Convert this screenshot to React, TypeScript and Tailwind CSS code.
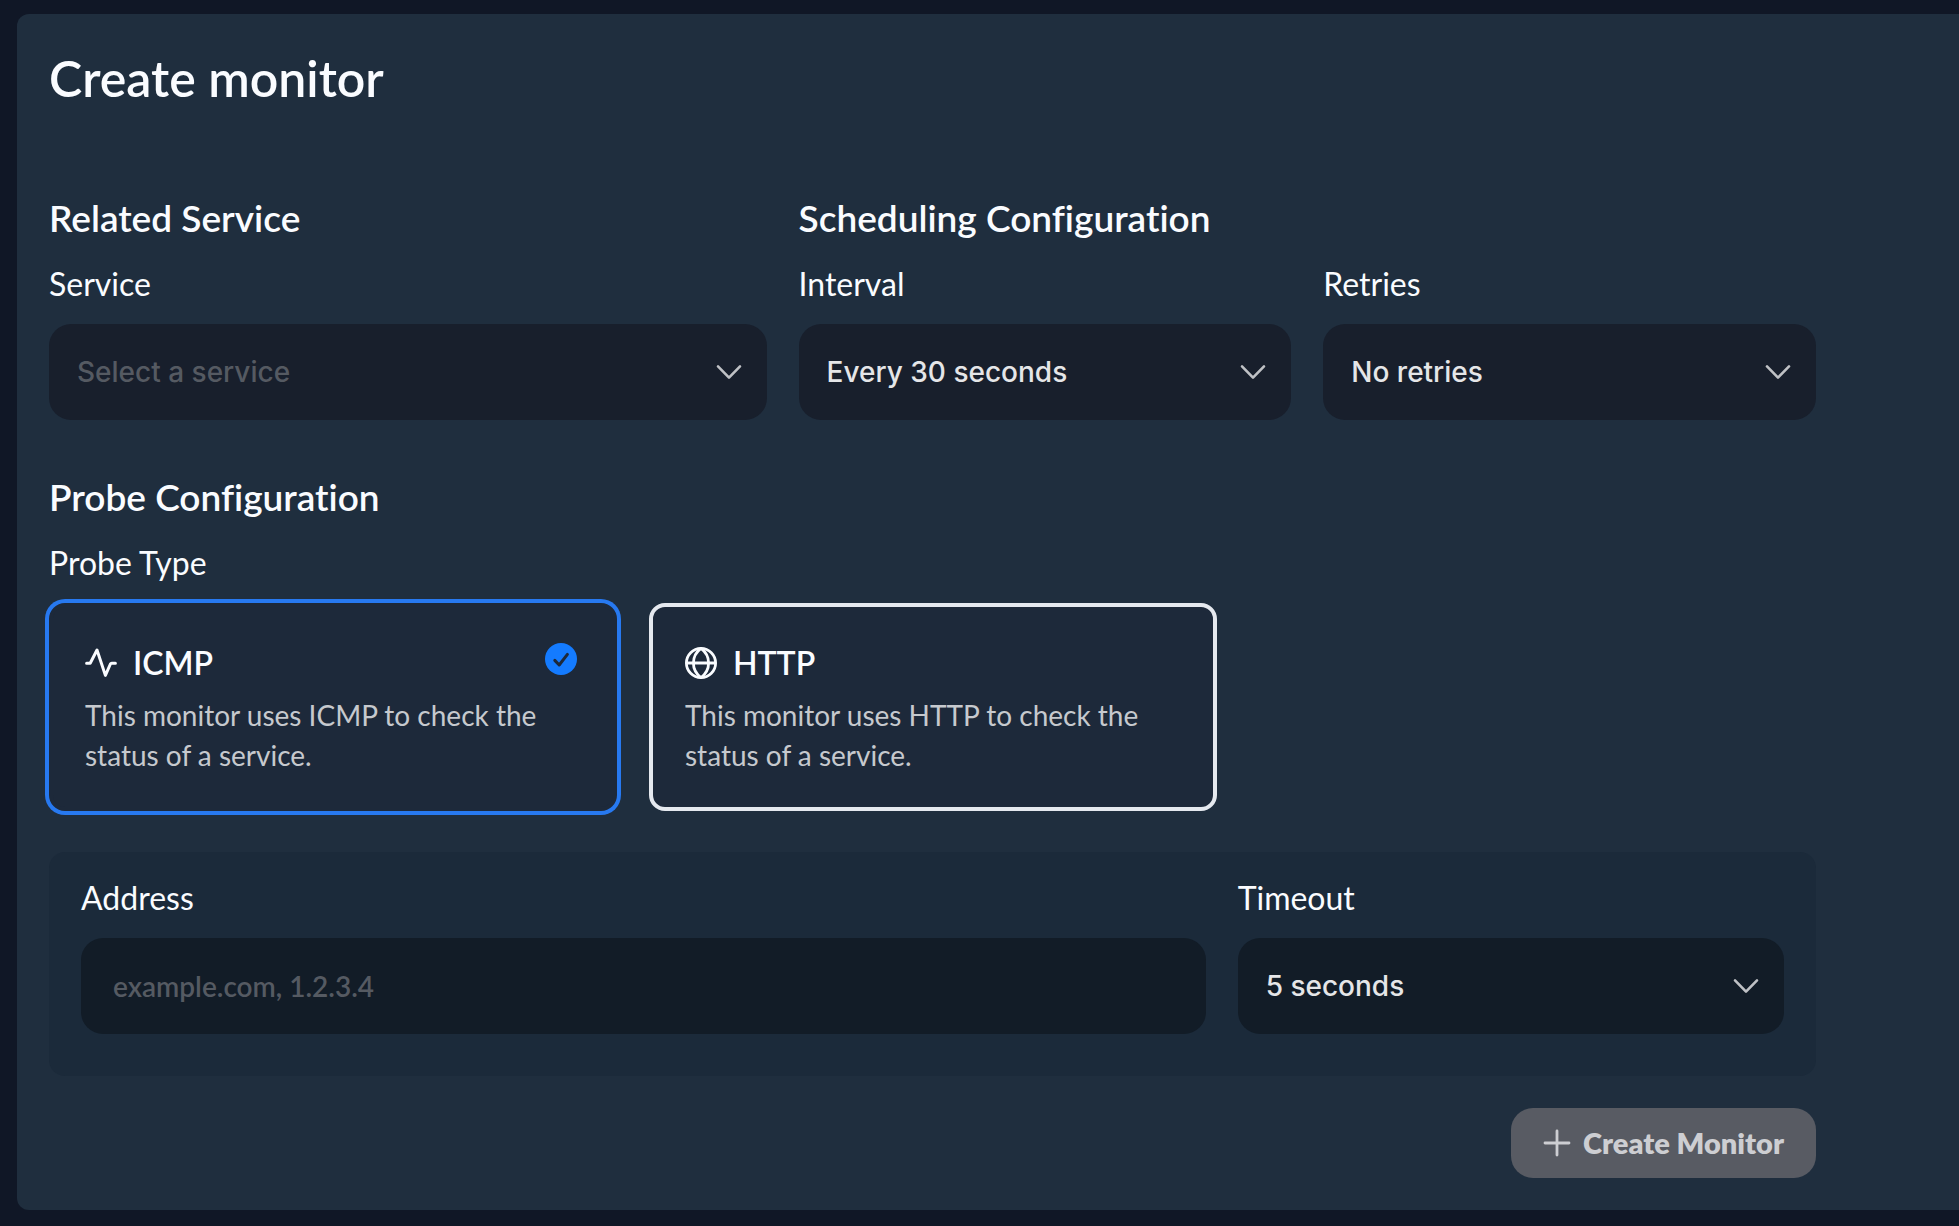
import { useId, useState, type ReactNode } from "react";
import clsx from "clsx";

type ProbeType = "icmp" | "http";

const SERVICES = ["Website", "API", "Database"];
const INTERVALS = ["Every 30 seconds", "Every minute", "Every 5 minutes"];
const RETRIES = ["No retries", "1 retry", "2 retries", "3 retries"];
const TIMEOUTS = ["5 seconds", "10 seconds", "30 seconds"];

const PROBES: { type: ProbeType; name: string; icon: ReactNode }[] = [
  { type: "icmp", name: "ICMP", icon: <PulseIcon /> },
  { type: "http", name: "HTTP", icon: <GlobeIcon /> },
];

function PulseIcon() {
  return (
    <svg
      viewBox="0 0 32 32"
      className="size-8"
      fill="none"
      stroke="currentColor"
      strokeWidth="3"
      strokeLinecap="round"
      strokeLinejoin="round"
      aria-hidden="true"
    >
      <path d="M1.6 16.2H5.2L12 3L20.4 28.4L25.4 17Q25.8 16.2 26.8 16.2H30.4" />
    </svg>
  );
}

function GlobeIcon() {
  return (
    <svg viewBox="0 0 32 32" className="size-8" fill="none" stroke="currentColor" strokeWidth="2.8" aria-hidden="true">
      <circle cx="16" cy="16" r="14.6" />
      <path d="M1.4 16H30.6M16 1.4C10.5 5.6 8.4 10.6 8.4 16S10.5 26.4 16 30.6C21.5 26.4 23.6 21.4 23.6 16S21.5 5.6 16 1.4Z" />
    </svg>
  );
}

function CheckIcon() {
  return (
    <svg viewBox="0 0 32 32" className="m-1 size-8 shrink-0" fill="none" aria-hidden="true">
      <circle cx="16" cy="16" r="16" fill="#147bff" />
      <path
        d="M9.8 17.4L14.2 22L22.4 11.4"
        stroke="#1d293a"
        strokeWidth="3"
        strokeLinecap="round"
        strokeLinejoin="round"
      />
    </svg>
  );
}

function ChevronIcon() {
  return (
    <svg
      viewBox="0 0 26 16"
      className="pointer-events-none absolute top-10 right-6 h-4 w-7"
      fill="none"
      stroke="#bfc1c5"
      strokeWidth="2.6"
      strokeLinecap="round"
      strokeLinejoin="round"
      aria-hidden="true"
    >
      <path d="M2 2.4L13 13.6L24 2.4" />
    </svg>
  );
}

function SectionTitle({ children }: { children: ReactNode }) {
  return <h2 className="mb-5 text-[37px] leading-11 font-semibold">{children}</h2>;
}

function SelectField({
  label,
  options,
  placeholder,
  inset,
}: {
  label: string;
  options: string[];
  placeholder?: string;
  inset?: boolean;
}) {
  const id = useId();
  const [value, setValue] = useState(placeholder ? "" : options[0]);

  return (
    <div className="min-w-0">
      <label htmlFor={id} className="mb-4 block text-[32px] leading-12">
        {label}
      </label>
      <div className="relative">
        <select
          id={id}
          value={value}
          onChange={(e) => setValue(e.target.value)}
          className={clsx(
            "block h-24 w-full appearance-none rounded-[22px] px-7 font-[Inter,sans-serif] text-[28px] leading-10 font-medium",
            inset ? "bg-[#121c27]" : "bg-[#181f2c]",
            value === "" ? "text-[#555a62]" : "text-[#e5e6e8]",
          )}
        >
          {placeholder ? (
            <option value="" disabled>
              {placeholder}
            </option>
          ) : null}
          {options.map((o) => (
            <option key={o}>{o}</option>
          ))}
        </select>
        <ChevronIcon />
      </div>
    </div>
  );
}

export default function App() {
  const [probe, setProbe] = useState<ProbeType>("icmp");
  const [address, setAddress] = useState("");

  return (
    <div className="min-h-screen bg-[#101726] pt-[14px] pb-4 pl-[17px] font-[Lato,sans-serif] text-[#fafcff] [font-variant-ligatures:none]">
      <main className="rounded-l-xl bg-[#1f2e3e] p-8">
        <h1 className="text-[50px] leading-16 font-semibold">Create monitor</h1>

        <form className="mt-[86px] max-w-[1767px]" onSubmit={(e) => e.preventDefault()}>
          <div className="grid grid-cols-12 gap-8">
            <section className="col-span-5">
              <SectionTitle>Related Service</SectionTitle>
              <SelectField label="Service" options={SERVICES} placeholder="Select a service" />
            </section>
            <section className="col-span-7">
              <SectionTitle>Scheduling Configuration</SectionTitle>
              <div className="grid grid-cols-2 gap-8">
                <SelectField label="Interval" options={INTERVALS} />
                <SelectField label="Retries" options={RETRIES} />
              </div>
            </section>
          </div>

          <section className="mt-[55px]">
            <SectionTitle>Probe Configuration</SectionTitle>
            <fieldset>
              <legend className="mb-4 text-[32px] leading-12">Probe Type</legend>
              <div className="flex gap-8">
                {PROBES.map((p) => {
                  const checked = p.type === probe;
                  return (
                    <label
                      key={p.type}
                      className={clsx(
                        "relative flex h-[208px] w-[568px] cursor-pointer items-start rounded-2xl border-4 bg-[#1d293a] p-8",
                        checked ? "border-[#1d293a] ring-4 ring-[#2779f0]" : "border-[#e5e9ef]",
                      )}
                    >
                      <input
                        type="radio"
                        name="probe-type"
                        value={p.type}
                        checked={checked}
                        onChange={() => setProbe(p.type)}
                        className="sr-only"
                      />
                      <span className="min-w-0 flex-1">
                        <span className="flex items-center gap-4 text-[32px] leading-12 font-semibold">
                          {p.icon}
                          {p.name}
                        </span>
                        <span className="mt-2 block text-[28px] leading-10 text-[#c6c9ce]">
                          {`This monitor uses ${p.name} to check the status of a service.`}
                        </span>
                      </span>
                      {checked ? <CheckIcon /> : null}
                    </label>
                  );
                })}
              </div>
            </fieldset>
          </section>

          <div className="mt-[41px] grid grid-cols-3 gap-8 rounded-2xl bg-[#1b2a3a] px-8 pt-[22px] pb-[42px]">
            <div className="col-span-2">
              <label htmlFor="address" className="mb-4 block text-[32px] leading-12">
                Address
              </label>
              <input
                id="address"
                type="text"
                value={address}
                onChange={(e) => setAddress(e.target.value)}
                placeholder="example.com, 1.2.3.4"
                className="block h-24 w-full rounded-[22px] bg-[#121c27] px-8 text-[28px] leading-10 font-semibold text-[#e5e6e8] placeholder:text-[#555a62]"
              />
            </div>
            <SelectField label="Timeout" options={TIMEOUTS} inset />
          </div>

          <div className="mt-8 flex justify-end">
            <button
              type="submit"
              disabled={address === ""}
              className="flex items-center gap-3 rounded-[22px] bg-[#585b63] px-8 py-[15px] text-[29px] leading-10 font-extrabold text-[#cdced2]"
            >
              <svg
                viewBox="0 0 28 28"
                className="size-7"
                fill="none"
                stroke="currentColor"
                strokeWidth="2.8"
                strokeLinecap="round"
                aria-hidden="true"
              >
                <path d="M14 2V26M2 14H26" />
              </svg>
              Create Monitor
            </button>
          </div>
        </form>
      </main>
    </div>
  );
}
